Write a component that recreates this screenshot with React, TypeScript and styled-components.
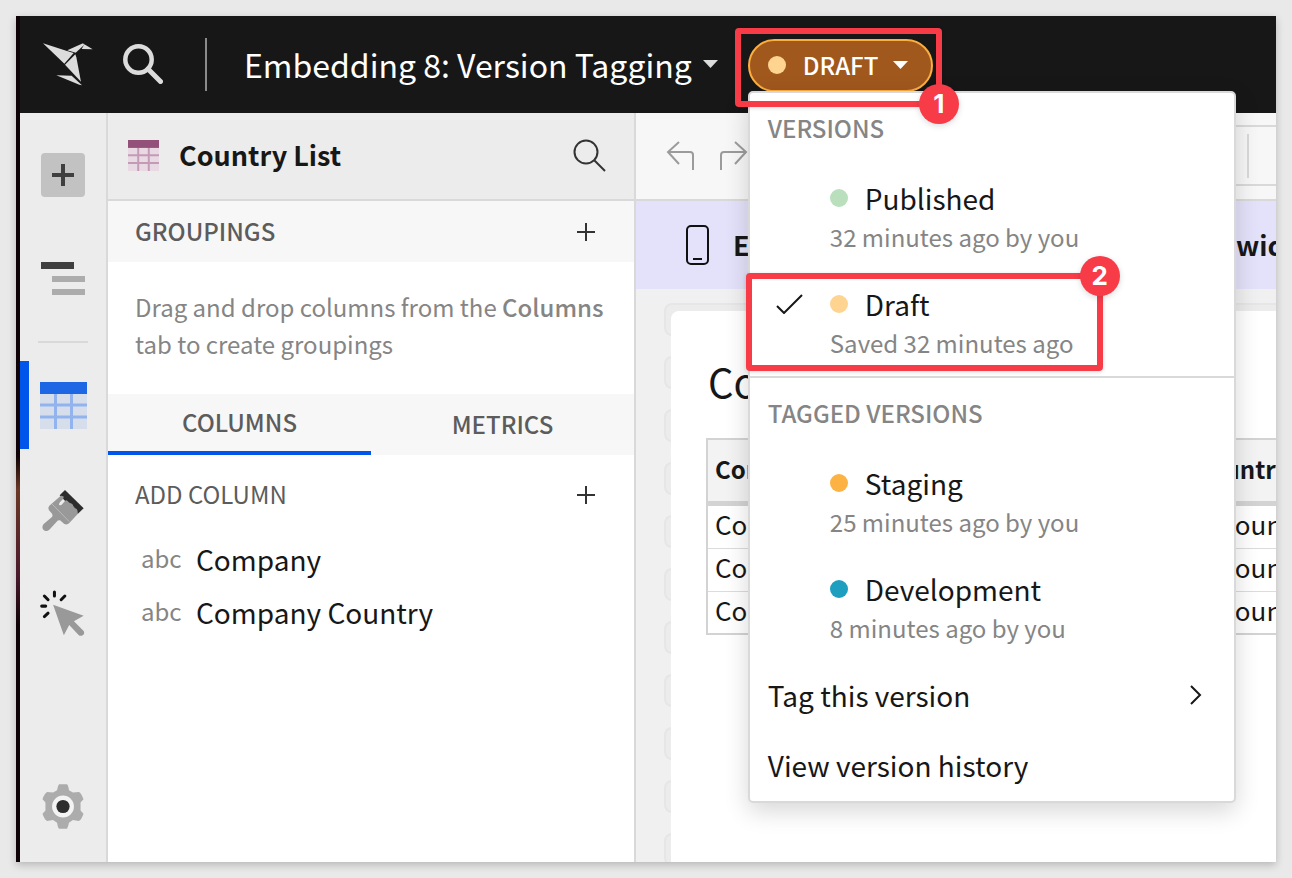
import React from "react";
import styled, { createGlobalStyle } from "styled-components";

const ink = "#171717";
const muted = "#858585";
const line = "#d9d9d9";
const red = "#f73c48";
const blue = "#0055ea";

const GlobalStyle = createGlobalStyle`
  *, *::before, *::after { box-sizing: border-box; }
  body {
    margin: 0;
    background: #e9e9e9;
    color: ${ink};
    font-family: "Noto Sans CJK SC", "Noto Sans", sans-serif;
    font-size: 26px;
    line-height: 40px;
  }
  button {
    margin: 0;
    padding: 0;
    border: 0;
    background: none;
    color: inherit;
    font: inherit;
    text-align: left;
    cursor: pointer;
  }
  h1, h2, h3, p, ul { margin: 0; padding: 0; font: inherit; list-style: none; }
  svg { display: block; flex: none; }
`;

const Backdrop = styled.div`
  display: flex;
  min-height: 100vh;
  padding: 16px;
`;

const Frame = styled.div`
  display: flex;
  flex: 1;
  min-width: 0;
  overflow: hidden;
  border-left: 4px solid #0e0206;
  border-image: linear-gradient(#0e0206 52%, #6b3826 56%, #4a1a2c 66%, #0e0206 72%) 1;
  background: #fff;
`;

const Shadow = styled.div`
  display: flex;
  flex: 1;
  min-width: 0;
  box-shadow: 0 3px 8px rgba(0, 0, 0, 0.22);
`;

const AppShell = styled.div`
  display: flex;
  flex-direction: column;
  flex: 1;
  min-width: 0;
`;

const TopBar = styled.header`
  display: flex;
  align-items: center;
  height: 97px;
  padding: 0 0 1px 23px;
  background: #171717;
  color: #fff;
  white-space: nowrap;
`;

const LogoLink = styled.a`
  margin-right: 30px;
`;

const TopDivider = styled.span`
  width: 2px;
  height: 53px;
  margin: 0 38px 0 42px;
  background: #8a8a8a;
`;

const DocTitle = styled.button`
  display: flex;
  align-items: center;
  gap: 11px;
  margin: 0 30px 0 -1px;
  font-size: 32px;
  line-height: 48px;
`;

const VersionPicker = styled.div`
  position: relative;
  z-index: 2;
  margin-top: 3px;
`;

const DraftPill = styled.button`
  display: flex;
  align-items: center;
  width: 185px;
  height: 53px;
  padding: 0 0 1px 18px;
  border: 2px solid #fcae3e;
  border-radius: 27px;
  background: #a0581d;
  font-size: 24px;
  font-weight: 500;

  svg { margin-left: 15px; }
`;

const Dot = styled.span<{ $color: string }>`
  flex: none;
  width: 18px;
  height: 18px;
  margin-right: 17px;
  border-radius: 50%;
  background: ${(p) => p.$color};
`;

const Menu = styled.div`
  position: absolute;
  top: 52px;
  left: 0;
  width: 488px;
  border: 2px solid ${line};
  border-radius: 5px;
  background: #fff;
  color: ${ink};
  box-shadow: 0 8px 24px rgba(0, 0, 0, 0.16);
`;

const MenuSection = styled.section`
  & + & { border-top: 2px solid ${line}; }
`;

const MenuHeading = styled.h2`
  padding: 0 0 2px 18px;
  color: ${muted};
  font-size: 24px;
  font-weight: 500;
  line-height: 69px;
`;

const VersionItem = styled.button`
  display: grid;
  grid-template-columns: 62px 1fr;
  width: 100%;
  padding: 14px 0 14px 18px;
`;

const CheckSlot = styled.span`
  display: flex;
  align-items: center;
  height: 40px;
  padding-left: 8px;
`;

const VersionName = styled.span`
  display: flex;
  align-items: center;
  font-size: 28px;
`;

const VersionNote = styled.span`
  grid-column: 2;
  color: ${muted};
  font-size: 24px;
  line-height: 38px;
`;

const MenuAction = styled.button`
  display: flex;
  align-items: center;
  justify-content: space-between;
  width: 100%;
  padding: 0 32px 2px 18px;
  font-size: 28px;
  line-height: 68px;
`;

const Callout = styled.div<{ $top: number; $left: number; $width: number; $height: number }>`
  position: absolute;
  top: ${(p) => p.$top}px;
  left: ${(p) => p.$left}px;
  width: ${(p) => p.$width}px;
  height: ${(p) => p.$height}px;
  border: 6px solid ${red};
  border-radius: 4px;
  box-shadow: 0 1px 4px rgba(0, 0, 0, 0.14);
  pointer-events: none;
`;

const CalloutNumber = styled.span<{ $corner: "top" | "bottom" }>`
  position: absolute;
  ${(p) => p.$corner}: -23px;
  right: -23px;
  width: 40px;
  height: 40px;
  border-radius: 50%;
  background: ${red};
  color: #fff;
  font: bold 26px/40px Inter, sans-serif;
  text-align: center;
  box-shadow: 0 2px 6px rgba(0, 0, 0, 0.14);
`;

const Workspace = styled.div`
  display: flex;
  flex: 1;
  min-height: 0;
`;

const Rail = styled.nav`
  display: flex;
  flex-direction: column;
  align-items: center;
  gap: 16px;
  width: 88px;
  flex: none;
  padding: 18px 0 12px;
  border-right: 2px solid ${line};
  background: #ececec;
`;

const RailButton = styled.button<{ $active?: boolean; $last?: boolean }>`
  display: flex;
  align-items: center;
  justify-content: center;
  width: 100%;
  height: 88px;
  margin-top: ${(p) => (p.$last ? "auto" : 0)};
  box-shadow: ${(p) => (p.$active ? `inset 9px 0 ${blue}` : "none")};
`;

const RailDivider = styled.span`
  width: 50px;
  height: 2px;
  margin: 2px 0;
  background: ${line};
`;

const Panel = styled.aside`
  width: 528px;
  flex: none;
  border-right: 2px solid ${line};
  background: #fff;
`;

const PanelHeader = styled.div`
  display: flex;
  align-items: center;
  height: 88px;
  padding: 0 28px 2px 20px;
  border-bottom: 2px solid ${line};
  background: #ececec;
`;

const PanelTitle = styled.h1`
  flex: 1;
  margin-left: 20px;
  font-size: 27px;
  font-weight: 700;
`;

const SectionBar = styled.div<{ $plain?: boolean }>`
  display: flex;
  align-items: center;
  justify-content: space-between;
  height: ${(p) => (p.$plain ? 80 : 61)}px;
  padding: 0 39px 0 27px;
  background: ${(p) => (p.$plain ? "#fff" : "#f7f7f7")};
  color: #5c5c5c;
  font-size: 24px;
  font-weight: ${(p) => (p.$plain ? 400 : 500)};
`;

const SectionTitle = styled.h2`
  padding-bottom: 2px;
`;

const Hint = styled.p`
  padding: 26px 27px 32px;
  color: ${muted};
  font-size: 24px;
  line-height: 37px;

  strong { font-weight: 500; }
`;

const Tabs = styled.div`
  display: grid;
  grid-template-columns: 1fr 1fr;
  height: 61px;
  background: #f7f7f7;
`;

const Tab = styled.button<{ $active?: boolean }>`
  padding-bottom: 2px;
  border-bottom: ${(p) => (p.$active ? `4px solid ${blue}` : "0")};
  color: #5c5c5c;
  font-size: 24px;
  font-weight: 500;
  text-align: center;
`;

const ColumnItem = styled.li`
  display: flex;
  align-items: center;
  height: 53px;
  padding: 0 0 5px 33px;
  font-size: 28px;
`;

const TypeTag = styled.span`
  width: 55px;
  padding-bottom: 2px;
  color: ${muted};
  font-size: 24px;
`;

const Main = styled.main`
  display: flex;
  flex-direction: column;
  flex: 1;
  min-width: 0;
  overflow: hidden;
`;

const Toolbar = styled.div`
  display: flex;
  align-items: center;
  gap: 24px;
  height: 88px;
  flex: none;
  padding: 0 0 1px 30px;
  border-bottom: 2px solid ${line};
  background: #f7f7f7;
`;

const FormulaBar = styled.div`
  display: flex;
  align-items: center;
  justify-content: flex-end;
  flex: 1;
  height: 61px;
  margin-left: 24px;
  padding-right: 27px;
  border: solid ${line};
  border-width: 2px 0;

  span { width: 2px; height: 44px; background: ${line}; }
`;

const Banner = styled.div`
  display: flex;
  align-items: center;
  height: 88px;
  flex: none;
  padding: 0 0 1px 50px;
  background: #e4e2fa;
  font-size: 27px;
  font-weight: 700;
  white-space: nowrap;

  svg { margin-right: 24px; }
`;

const BannerLead = styled.span`
  flex: 0 0 503px;
`;

const Canvas = styled.div`
  display: grid;
  flex: 1;
  padding: 14px 0 0 28px;
  background: #f0f0f0;
`;

const Lanes = styled.div`
  grid-area: 1 / 1;
  contain: size;
  overflow: hidden;
`;

const Lane = styled.div`
  height: 33px;
  margin-bottom: 20px;
  border: 2px solid #e6e6e6;
  border-right: 0;
  border-radius: 8px 0 0 8px;
  background: #ececec;
`;

const Sheet = styled.section`
  grid-area: 1 / 1;
  z-index: 1;
  min-width: 0;
  margin: 8px 0 0 7px;
  padding: 44px 0 0 35px;
  overflow: hidden;
  border-radius: 8px 0 0 0;
  background: #fff;
`;

const SheetTitle = styled.h2`
  margin: 0 0 31px 2px;
  font-size: 40px;
  line-height: 52px;
  white-space: nowrap;
`;

const DataTable = styled.table`
  width: 760px;
  table-layout: fixed;
  border-spacing: 0;
  border: 2px solid #d3d3d3;
  font-size: 26px;
  line-height: 36px;
  white-space: nowrap;

  th {
    padding: 11px 7px 14px;
    border-bottom: 5px solid #d3d3d3;
    background: #f3f3f3;
    font-size: 24px;
    font-weight: 700;
    text-align: left;
  }
  th:first-child { width: 361px; }
  td { padding: 0 7px 6px; border-bottom: 1px solid #dcdcdc; }
  tr:last-child td { border-bottom: 0; padding-bottom: 5px; }
`;

const Caret = ({ color }: { color: string }) => (
  <svg width="15" height="8" viewBox="0 0 15 8"><path d="M0 0h15L7.500 8z" fill={color} /></svg>
);

const PlusThin = () => (
  <svg width="18" height="18" viewBox="0 0 18 18" stroke="#333" strokeWidth="2"><path d="M9 0v18M0 9h18" /></svg>
);

const TableGlyph = ({ size, head, lineColor, cell }: { size: number; head: string; lineColor: string; cell: string }) => (
  <svg width={size} height={size} viewBox="0 0 47 47">
    <path d="M0 0h47v47H0z" fill={cell} />
    <path d="M15.500 11v36M31.500 11v36M0 23h47M0 35h47" stroke={lineColor} strokeWidth="3" />
    <path d="M0 0h47v12H0z" fill={head} />
  </svg>
);

const Bird = () => (
  <svg width="50" height="43" viewBox="128 131 150 129" fill="#dcdcdc">
    <path d="M128 132l72 23 20 6-28 32z" />
    <path d="M201 153l47-21 4 4-26 24z" />
    <path d="M252 135l25 15-33-1z" />
    <path d="M194 196l31-31 3 9 14 73z" />
    <path d="M168 228l46 1 31 29-8-2z" />
  </svg>
);

const Undo = ({ flip }: { flip?: boolean }) => (
  <svg width="29" height="30" viewBox="0 0 29 30" fill="none" stroke="#9b9b9b" strokeWidth="2">
    <path d={flip ? "M2 29V14q0-3 3-3h22M16 1l11 10-11 12" : "M27 29V14q0-3-3-3H2M13 1L2 11l11 12"} />
  </svg>
);

const columns = ["Company", "Company Country"];
const published = { name: "Published", note: "32 minutes ago by you", color: "#b9dfbd" };
const draft = { name: "Draft", note: "Saved 32 minutes ago", color: "#ffd390" };
const tagged = [
  { name: "Staging", note: "25 minutes ago by you", color: "#fdb344" },
  { name: "Development", note: "8 minutes ago by you", color: "#1e9fc0" },
];

type VersionProps = { name: string; note: string; color: string; checked?: boolean };

const Version = ({ name, note, color, checked }: VersionProps) => (
  <VersionItem>
    <CheckSlot>
      {checked && (
        <svg width="27" height="20" viewBox="0 0 27 20" fill="none" stroke={ink} strokeWidth="2">
          <path d="M1 12l7 7L26 1" />
        </svg>
      )}
    </CheckSlot>
    <VersionName><Dot $color={color} />{name}</VersionName>
    <VersionNote>{note}</VersionNote>
  </VersionItem>
);

export default function App() {
  return (
    <Backdrop>
      <GlobalStyle />
      <Shadow>
        <Frame>
          <AppShell>
            <TopBar>
              <LogoLink href="#" aria-label="Home"><Bird /></LogoLink>
              <button aria-label="Search">
                <svg width="40" height="40" viewBox="0 0 40 40" fill="none" stroke="#dcdcdc">
                  <circle cx="15.500" cy="15.500" r="13.200" strokeWidth="4.500" />
                  <path d="M25 25l12.500 12.500" strokeWidth="5" strokeLinecap="round" />
                </svg>
              </button>
              <TopDivider />
              <DocTitle>Embedding 8: Version Tagging<Caret color="#dcdcdc" /></DocTitle>
              <VersionPicker>
                <DraftPill aria-expanded="true">
                  <Dot $color="#ffd390" />DRAFT<Caret color="#fff" />
                </DraftPill>
                <Menu>
                  <MenuSection>
                    <MenuHeading>VERSIONS</MenuHeading>
                    <Version {...published} />
                    <Version {...draft} checked />
                  </MenuSection>
                  <MenuSection>
                    <MenuHeading>TAGGED VERSIONS</MenuHeading>
                    {tagged.map((v) => <Version key={v.name} {...v} />)}
                    <MenuAction>
                      Tag this version
                      <svg width="12" height="20" viewBox="0 0 12 20" fill="none" stroke={ink} strokeWidth="2">
                        <path d="M1 1l9 9-9 9" />
                      </svg>
                    </MenuAction>
                    <MenuAction>View version history</MenuAction>
                  </MenuSection>
                </Menu>
                <Callout $top={-11} $left={-13} $width={207} $height={79}>
                  <CalloutNumber $corner="bottom">1</CalloutNumber>
                </Callout>
                <Callout $top={234} $left={-2} $width={357} $height={98}>
                  <CalloutNumber $corner="top">2</CalloutNumber>
                </Callout>
              </VersionPicker>
            </TopBar>
            <Workspace>
              <Rail>
                <RailButton aria-label="Add element">
                  <svg width="46" height="46" viewBox="0 0 46 46">
                    <rect x="1" y="1" width="44" height="44" rx="4" fill="#c2c2c2" />
                    <path d="M23 12v22M12 23h22" stroke="#3f3f3f" strokeWidth="4" />
                  </svg>
                </RailButton>
                <RailButton aria-label="Outline">
                  <svg width="46" height="36" viewBox="0 0 46 36">
                    <path d="M1 1h33v7H1z" fill="#3f3f3f" />
                    <path d="M12 15h33v6H12zM12 28h33v6H12z" fill="#acacac" />
                  </svg>
                </RailButton>
                <RailDivider />
                <RailButton aria-label="Table" $active>
                  <TableGlyph size={47} head="#1d67e5" lineColor="#92b3ec" cell="#d6deec" />
                </RailButton>
                <RailButton aria-label="Format">
                  <svg width="42" height="46" viewBox="128 52 126 138">
                    <path d="M197 64l56 55-18 17-54-56z" fill="#2d2d2d" />
                    <path d="M181 84q5-5 11-1 2 4-1 8l-8 8q-6 7-3 10 5 2 9-3l8-9q4-5 8 0 4 6 9 7 6 1 8 8 4 7 10 9 4 4 3 15l-25 27q-7 7-15 3l-13-11q-6-1-10 4l-22 24q-10 8-18 0-6-8 1-17l24-20q5-5 0-12l-8-9q-4-8 1-14z" fill="#999" />
                    <path d="M158 106l52 53" stroke="#c9c9c9" strokeWidth="2" />
                  </svg>
                </RailButton>
                <RailButton aria-label="Actions">
                  <svg width="46" height="46" viewBox="117 361 137 137">
                    <path d="M156 405l91 33-29 16 29 29q4 8-2 12-7 5-13 0l-28-30-16 31z" fill="#999" />
                    <path d="M160 367v12M130 379l11 11M122 409h12M130 440l11-10M180 390l11-11" stroke="#111" strokeWidth="9" strokeLinecap="round" />
                  </svg>
                </RailButton>
                <RailButton aria-label="Settings" $last>
                  <svg width="42" height="45" viewBox="128 131 124 136">
                    <path d="M178 132h24q4 3 6 18l12 7 18-2q7 3 14 22l-9 10v24l9 10q-6 18-14 22l-18-3-12 8q-2 12-6 18h-24q-4-4-6-18l-12-8-18 3q-8-4-14-22l9-10v-24l-9-10q6-18 14-22l18 2 12-7q2-14 6-18z" fill="#acacac" />
                    <circle cx="190" cy="199" r="33" fill="#f3f3f3" />
                    <circle cx="190" cy="199" r="20" fill="#2d2d2d" />
                  </svg>
                </RailButton>
              </Rail>
              <Panel>
                <PanelHeader>
                  <TableGlyph size={31} head="#935078" lineColor="#c39bb7" cell="#e9d9e3" />
                  <PanelTitle>Country List</PanelTitle>
                  <button aria-label="Search columns">
                    <svg width="33" height="33" viewBox="0 0 33 33" fill="none" stroke="#333" strokeWidth="2">
                      <circle cx="13" cy="13" r="11.500" />
                      <path d="M21 21l11 11" />
                    </svg>
                  </button>
                </PanelHeader>
                <SectionBar>
                  <SectionTitle>GROUPINGS</SectionTitle>
                  <button aria-label="Add grouping"><PlusThin /></button>
                </SectionBar>
                <Hint>Drag and drop columns from the <strong>Columns</strong> tab to create groupings</Hint>
                <Tabs role="tablist">
                  <Tab role="tab" aria-selected="true" $active>COLUMNS</Tab>
                  <Tab role="tab" aria-selected="false">METRICS</Tab>
                </Tabs>
                <SectionBar $plain>
                  <SectionTitle>ADD COLUMN</SectionTitle>
                  <button aria-label="Add column"><PlusThin /></button>
                </SectionBar>
                <ul>
                  {columns.map((c) => <ColumnItem key={c}><TypeTag>abc</TypeTag>{c}</ColumnItem>)}
                </ul>
              </Panel>
              <Main>
                <Toolbar>
                  <button aria-label="Undo"><Undo /></button>
                  <button aria-label="Redo"><Undo flip /></button>
                  <FormulaBar><span /></FormulaBar>
                </Toolbar>
                <Banner>
                  <svg width="23" height="40" viewBox="0 0 23 40" fill="none" stroke="#111" strokeWidth="2">
                    <rect x="1" y="1" width="21" height="38" rx="4" />
                    <path d="M7 34h9" />
                  </svg>
                  <BannerLead>Edit</BannerLead>
                  <span>width</span>
                </Banner>
                <Canvas>
                  <Lanes>{Array.from({ length: 24 }, (_, i) => <Lane key={i} />)}</Lanes>
                  <Sheet>
                    <SheetTitle>Country List</SheetTitle>
                    <DataTable>
                      <thead><tr><th>Company</th><th>Company Country</th></tr></thead>
                      <tbody>
                        {[1, 2, 3].map((n) => (
                          <tr key={n}><td>Company {n}</td><td>Company {n} Country</td></tr>
                        ))}
                      </tbody>
                    </DataTable>
                  </Sheet>
                </Canvas>
              </Main>
            </Workspace>
          </AppShell>
        </Frame>
      </Shadow>
    </Backdrop>
  );
}
